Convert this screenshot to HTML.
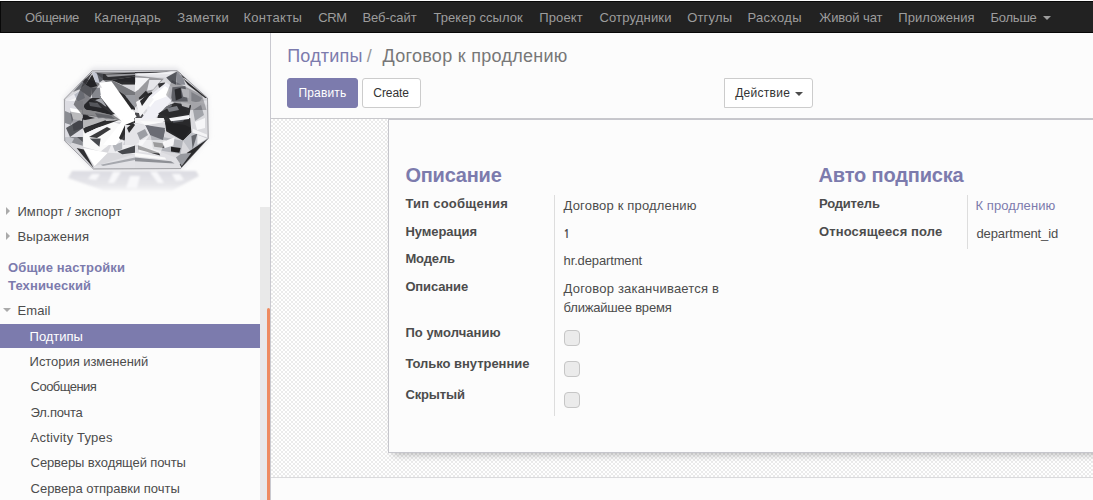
<!DOCTYPE html>
<html lang="ru">
<head>
<meta charset="utf-8">
<title>Odoo</title>
<style>
*{box-sizing:border-box;margin:0;padding:0}
html,body{width:1093px;height:500px;overflow:hidden;background:#fcfcfc}
body{position:relative;font-family:"Liberation Sans",Arial,sans-serif;font-size:13px;color:#4c4c4c;line-height:1.42857}
.t{position:absolute;white-space:nowrap;display:block;text-decoration:none}
h2{margin:0}
#nav{position:absolute;left:0;top:1px;width:1093px;height:32px;background:#222;border:1px solid #080808;border-right:0}
#nav .t{color:#9d9d9d;font-size:13px;line-height:30px}
.caret{position:absolute;width:0;height:0;border-top:4px solid;border-left:4px solid transparent;border-right:4px solid transparent}
#side{position:absolute;left:0;top:33px;width:271px;height:467px;border-right:1px solid #c9c9d0;background:#fcfcfc}
#side .t{height:25px;line-height:25px;color:#4c4c4c}
#side .hd{font-weight:bold;color:#7c7bad}
#act{position:absolute;left:0;top:291px;width:260px;height:24px;background:#7c7bad}
.tr{position:absolute;width:0;height:0;border-top:4px solid transparent;border-bottom:4px solid transparent;border-left:4px solid #aaa}
.td{position:absolute;width:0;height:0;border-left:4px solid transparent;border-right:4px solid transparent;border-top:4px solid #aaa}
#track{position:absolute;left:260px;top:174px;width:10px;height:293px;background:#e9e9e9}
#thumb{position:absolute;left:267px;top:275px;width:3px;height:200px;background:#ee8b60;border-radius:1.5px 1.5px 0 0}
#cp{position:absolute;left:271px;top:33px;width:822px;height:86px;background:#fcfcfc;border-bottom:1px solid #c8c8cc}
#cp .bc{font-size:18px;line-height:26px;color:#777}
.btn{position:absolute;top:45px;height:30px;border:1px solid #ccc;border-radius:3px;background:#fff;font:inherit;overflow:visible;text-align:left;display:block}
.btn.p{background:#7c7bad;border-color:#7c7bad}
#cp .bt{font-size:12px;line-height:18px;color:#333}
#main{position:absolute;left:271px;top:119px;width:822px;height:359px;border-bottom:1px solid #dadadc;
 background-color:#fff;background-image:repeating-conic-gradient(#ebebeb 0% 25%,#ffffff 0% 50%);background-size:4px 4px}
#sheet{position:absolute;left:117px;top:0;width:720px;height:334px;background:#fcfcfc;border:1px solid #c6c6cc;box-shadow:0 7px 7px -5px rgba(0,0,0,0.24)}
.h{font-size:20px;font-weight:bold;color:#7c7bad;line-height:24px}
.lb{font-weight:bold;color:#4c4c4c;line-height:18px}
.vl{line-height:19px;color:#4c4c4c}
.vline{position:absolute;width:1px;background:#ddd}
.cb{position:absolute;width:16px;height:16px;border:1px solid #c6c6c6;border-radius:4px;background:#ebebeb}
</style>
</head>
<body>
<nav id="nav">
<a id="n1" class="t" style="left:24.00px;top:1px;letter-spacing:-0.446px;">Общение</a>
<a id="n2" class="t" style="left:93.20px;top:1px;letter-spacing:0.107px;">Календарь</a>
<a id="n3" class="t" style="left:176.30px;top:1px;letter-spacing:0.273px;">Заметки</a>
<a id="n4" class="t" style="left:242.40px;top:1px;letter-spacing:0.327px;">Контакты</a>
<a id="n5" class="t" style="left:317.20px;top:1px;letter-spacing:-0.388px;">CRM</a>
<a id="n6" class="t" style="left:361.40px;top:1px;letter-spacing:-0.017px;">Веб-сайт</a>
<a id="n7" class="t" style="left:432.50px;top:1px;letter-spacing:0.052px;">Трекер ссылок</a>
<a id="n8" class="t" style="left:538.30px;top:1px;letter-spacing:0.107px;">Проект</a>
<a id="n9" class="t" style="left:598.40px;top:1px;letter-spacing:0.183px;">Сотрудники</a>
<a id="n10" class="t" style="left:686.20px;top:1px;letter-spacing:0.179px;">Отгулы</a>
<a id="n11" class="t" style="left:746.40px;top:1px;letter-spacing:0.324px;">Расходы</a>
<a id="n12" class="t" style="left:818.20px;top:1px;letter-spacing:-0.056px;">Живой чат</a>
<a id="n13" class="t" style="left:897.30px;top:1px;letter-spacing:0.020px;">Приложения</a>
<a id="n14" class="t" style="left:989.50px;top:1px;letter-spacing:-0.233px;">Больше</a>
<span class="caret" style="left:1042px;top:14px;color:#9d9d9d"></span>
</nav>
<aside id="side">
<svg id="logo" style="position:absolute;left:0;top:0" width="270" height="170" viewBox="0 0 270 170">
<defs><linearGradient id="sh" x1="0" y1="0" x2="0" y2="1"><stop offset="0" stop-color="#dcdce2"/><stop offset="0.7" stop-color="#e6e6ea"/><stop offset="1" stop-color="#f4f4f6"/></linearGradient><clipPath id="oc"><polygon points="92.2,37.8 177.0,37.6 207.5,65.0 208.3,105.4 180.6,135.6 93.4,136.0 64.6,107.8 64.4,66.2"/></clipPath><filter id="b1" x="-10%" y="-10%" width="120%" height="120%"><feGaussianBlur stdDeviation="0.8"/></filter><filter id="bl" x="-20%" y="-20%" width="140%" height="140%"><feGaussianBlur stdDeviation="2.5"/></filter></defs>
<polygon points="92.2,34.8 177.0,34.6 207.5,63.1 208.3,105.1 180.6,136.5 93.4,137.0 64.6,107.6 64.4,64.4" fill="#e4e4e8" filter="url(#bl)"/>
<g filter="url(#b1)">
<polygon points="72.0,138.0 196.0,138.0 199.0,143.0 172.0,157.5 104.0,157.5 68.0,145.0" fill="url(#sh)"/>
<polygon points="113.0,139.0 121.0,139.0 114.0,150.0 108.0,150.0" fill="#f8f8fa"/>
<polygon points="150.0,139.0 157.0,139.0 164.0,150.0 158.0,150.0" fill="#f8f8fa"/>
<polygon points="130.0,143.0 140.0,143.0 137.0,155.0 126.0,155.0" fill="#f8f8fa"/>
<polygon points="92.0,141.0 100.0,141.0 96.0,147.0 88.0,146.0" fill="#f8f8fa"/>
<polygon points="172.0,141.0 180.0,141.0 184.0,147.0 176.0,148.0" fill="#f8f8fa"/>
</g>
<g clip-path="url(#oc)">
<polygon points="92.2,37.8 177.0,37.6 207.5,65.0 208.3,105.4 180.6,135.6 93.4,136.0 64.6,107.8 64.4,66.2" fill="#d8d8dc"/>
<polygon points="65.8,66.2 82.6,55.4 91.0,65.0 83.8,74.6 67.0,72.8" fill="#e9e9ee"/>
<polygon points="74.2,61.4 82.6,56.0 85.0,65.0 77.8,68.6" fill="#b9bcc6"/>
<polygon points="79.0,56.6 85.6,51.8 91.0,54.8 91.0,65.0" fill="#8e9096"/>
<polygon points="85.6,51.8 92.2,41.6 97.2,53.0 91.0,54.8" fill="#2a2a2c"/>
<polygon points="92.4,39.2 96.7,39.8 99.6,49.4 96.0,50.8" fill="#c3c7d3"/>
<polygon points="96.7,39.8 105.4,41.0 103.0,47.0 99.6,49.4" fill="#5c5e64"/>
<polygon points="91.0,54.8 100.0,54.8 101.2,65.0 92.2,65.0" fill="#86888e"/>
<polygon points="103.0,41.0 135.0,39.6 135.0,43.4 111.4,47.0 103.0,47.0" fill="#3a3a3c"/>
<polygon points="105.4,41.6 135.0,40.8 135.0,42.0 107.8,44.0" fill="#dcdce0"/>
<polygon points="103.0,47.0 111.4,47.0 135.0,59.0 135.0,68.6 111.4,53.0" fill="#77787c"/>
<polygon points="111.4,47.0 135.0,43.4 135.0,51.8 122.2,51.8" fill="#2c2c2e"/>
<polygon points="122.2,51.8 135.0,51.8 135.0,59.0" fill="#d8d8dc"/>
<polygon points="111.4,53.0 135.0,68.6 135.0,77.0 127.0,74.6 109.0,54.8" fill="#2e2e30"/>
<polygon points="100.0,54.8 109.0,54.2 135.0,79.4 135.0,89.0 122.2,89.0 101.2,65.0" fill="#ffffff"/>
<polygon points="83.8,73.6 92.2,65.0 101.2,65.0 112.6,79.4 86.2,77.2" fill="#2a2a2c"/>
<polygon points="91.0,68.6 101.2,65.0 106.6,73.4 94.6,74.6" fill="#a4a6ac"/>
<polygon points="65.8,72.8 83.8,74.6 86.2,77.2 91.0,89.0 66.0,89.0" fill="#dedee2"/>
<polygon points="66.4,77.0 73.0,75.8 75.4,81.8 67.0,85.4" fill="#6a6c72"/>
<polygon points="79.0,78.2 86.2,77.2 91.0,85.4 83.8,86.6" fill="#3a3a3e"/>
<polygon points="86.2,77.2 112.6,79.4 122.2,89.0 91.0,89.0" fill="#f2f2f4"/>
<polygon points="94.6,80.6 111.4,81.8 115.0,85.4 98.2,85.4" fill="#a0a2a8"/>
<polygon points="135.0,38.6 175.8,38.1 166.2,44.6 135.0,42.4" fill="#e4e4e8"/>
<polygon points="135.0,39.1 171.0,38.6 149.4,40.8 135.0,40.3" fill="#3c3c40"/>
<polygon points="166.2,44.6 177.0,38.6 176.0,51.8 171.0,49.4" fill="#55575d"/>
<polygon points="177.0,38.6 183.0,44.6 185.4,51.8 176.4,51.8" fill="#8a8c94"/>
<polygon points="180.6,41.0 187.8,47.0 183.0,44.6" fill="#2a2a2c"/>
<polygon points="135.0,42.4 163.8,45.8 142.2,68.6 135.0,74.6" fill="#9a9a9e"/>
<polygon points="135.0,44.6 149.4,45.2 138.6,56.6 135.0,59.0" fill="#f4f4f6"/>
<polygon points="145.8,61.4 151.8,59.0 154.2,65.0 148.2,68.6" fill="#222224"/>
<polygon points="157.8,50.6 165.0,49.4 163.8,55.4 159.0,54.8" fill="#333336"/>
<polygon points="149.4,47.0 161.4,47.0 153.0,56.6 147.0,57.8" fill="#e6e6ea"/>
<polygon points="138.6,65.0 145.8,57.8 148.2,60.2 141.0,68.6" fill="#2c2c2e"/>
<polygon points="142.2,68.6 166.2,49.4 172.4,54.2 170.0,67.4 151.8,85.4" fill="#ececf2"/>
<polygon points="147.0,68.6 165.0,53.0 169.8,56.6 167.4,66.2 153.0,80.6" fill="#ffffff"/>
<polygon points="172.4,54.2 185.4,53.0 187.8,68.6 171.0,68.6" fill="#77797f"/>
<polygon points="174.6,56.6 180.6,54.8 181.8,65.0 175.8,67.4" fill="#2a2a2c"/>
<polygon points="181.2,55.4 189.0,56.8 189.0,65.0 183.2,63.8" fill="#f0f0f2"/>
<polygon points="189.0,53.0 207.0,65.0 206.0,79.4 191.4,68.8" fill="#d4d4d8"/>
<polygon points="183.0,45.2 207.0,65.0 205.2,65.0 187.8,51.8" fill="#2c2c2e"/>
<polygon points="191.4,59.0 202.2,65.0 197.4,72.2 191.4,68.6" fill="#a6a8ae"/>
<polygon points="159.0,77.0 174.6,69.8 191.4,72.2 187.8,89.0 156.6,89.0" fill="#303032"/>
<polygon points="160.2,77.0 171.0,71.0 174.6,77.0 165.0,81.8" fill="#6d6f75"/>
<polygon points="191.4,69.8 207.0,67.4 207.2,89.0 189.0,89.0" fill="#e2e2e6"/>
<polygon points="192.6,74.6 202.2,72.2 199.8,84.2 192.6,85.4" fill="#9ea0a6"/>
<polygon points="135.0,74.6 151.8,85.4 147.0,89.0 135.0,89.0" fill="#e9e9ec"/>
<polygon points="135.0,79.4 142.2,80.6 145.8,85.4 135.0,85.4" fill="#4a4a4e"/>
<polygon points="65.2,85.0 71.8,86.2 67.0,94.6 65.2,97.0" fill="#444448"/>
<polygon points="71.8,86.2 83.2,87.4 82.6,92.2 67.0,97.0" fill="#e6e6ea"/>
<polygon points="67.0,97.0 82.6,89.8 82.8,112.8 65.2,107.8" fill="#8c8e94"/>
<polygon points="73.0,100.6 82.6,99.4 82.8,109.0" fill="#55575c"/>
<polygon points="65.8,103.0 74.2,105.4 70.6,111.4 65.2,107.8" fill="#c4c6cc"/>
<polygon points="76.6,115.0 83.8,116.4 93.6,135.1 85.0,125.2" fill="#303033"/>
<polygon points="83.2,87.4 103.0,85.0 122.2,92.2 112.6,109.0 100.6,118.6 83.2,113.8" fill="#fafafa"/>
<polygon points="85.0,94.6 105.4,87.2 107.8,89.8 87.4,98.4" fill="#333336"/>
<polygon points="89.8,105.4 100.6,105.4 99.4,113.8" fill="#47494e"/>
<polygon points="91.0,98.2 103.0,94.6 100.6,103.0 91.0,104.2" fill="#b8bac0"/>
<polygon points="83.2,115.0 107.8,119.8 94.6,133.2" fill="#ffffff"/>
<polygon points="112.6,109.0 135.0,97.0 135.0,121.0 107.8,119.8" fill="#ededf0"/>
<polygon points="119.8,105.4 131.8,89.8 135.0,92.2 124.6,107.8" fill="#444448"/>
<polygon points="112.6,112.6 122.2,109.0 122.2,116.2 115.0,118.6" fill="#b4b6bc"/>
<polygon points="117.4,118.6 135.0,112.6 135.0,119.8 122.2,121.2" fill="#47494e"/>
<polygon points="122.2,85.0 135.0,85.0 135.0,89.8 127.0,92.2" fill="#2c2c2e"/>
<polygon points="94.6,133.2 135.0,121.0 135.0,135.6 93.6,135.6" fill="#e2e2e6"/>
<polygon points="100.6,131.8 135.0,124.6 135.0,127.0 103.0,133.0" fill="#a6a8ae"/>
<polygon points="135.0,85.0 163.8,85.0 165.0,88.6 147.0,92.2 135.0,89.8" fill="#f2f2f4"/>
<polygon points="147.0,92.2 165.0,97.0 162.6,109.0 150.6,100.6" fill="#6c6e74"/>
<polygon points="165.0,88.6 190.2,85.0 191.4,99.4 183.0,107.8 166.2,98.2" fill="#29292b"/>
<polygon points="171.0,85.0 185.4,85.0 183.0,88.6 173.4,89.8" fill="#55575d"/>
<polygon points="135.0,91.0 147.0,92.2 150.6,100.6 142.2,112.6 135.0,111.4" fill="#efeff2"/>
<polygon points="137.4,95.8 145.8,97.0 143.4,105.4 137.4,104.2" fill="#a9abb1"/>
<polygon points="150.6,101.8 183.0,107.8 180.6,121.0 153.0,116.2" fill="#b2b4ba"/>
<polygon points="162.6,109.0 174.6,104.2 173.4,112.6 165.0,115.0" fill="#f6f6f8"/>
<polygon points="153.0,109.0 162.6,110.2 163.8,115.0 154.2,113.8" fill="#222224"/>
<polygon points="171.0,113.8 180.6,115.0 179.4,119.8 171.0,118.6" fill="#222224"/>
<polygon points="191.4,99.4 208.2,105.4 191.4,119.8 183.0,107.8" fill="#bfc1c7"/>
<polygon points="191.4,103.0 197.4,100.6 192.6,116.2" fill="#66686e"/>
<polygon points="197.4,101.8 207.0,105.4 197.4,111.4" fill="#f0f0f2"/>
<polygon points="187.8,119.2 208.4,105.6 182.0,134.8 178.8,132.4" fill="#2a2a2c"/>
<polygon points="180.6,121.0 191.4,119.8 181.8,133.0 175.8,124.6" fill="#97999f"/>
<polygon points="135.0,113.8 153.0,116.2 175.8,124.6 181.8,135.1 135.0,135.6" fill="#e0e0e4"/>
<polygon points="138.6,112.6 159.0,119.8 160.2,122.4 138.6,116.4" fill="#333336"/>
<polygon points="135.0,124.6 171.0,128.2 174.6,130.6 135.0,128.2" fill="#8e9096"/>
<polygon points="135.0,119.8 165.0,124.6 166.2,126.4 135.0,123.4" fill="#fafafa"/>
<polygon points="82.0,48.8 91.0,40.4 92.4,39.2 85.6,51.8" fill="#4a4a4e"/>
<polygon points="73.0,59.0 82.0,48.8 85.6,51.8 79.0,56.6" fill="#707278"/>
<polygon points="67.0,68.6 75.4,65.0 79.0,71.0 69.4,72.8" fill="#f6f6f8"/>
<polygon points="177.0,38.1 184.2,41.6 180.6,41.0" fill="#2e2e30"/>
<polygon points="137.4,40.5 174.6,39.1 171.0,41.0 137.4,41.7" fill="#f2f2f4"/>
<polygon points="65.6,98.2 73.0,97.0 71.8,103.0 65.8,103.0" fill="#f8f8fa"/>
<polygon points="192.6,92.2 207.0,99.4 207.0,104.2 192.6,99.4" fill="#f4f4f6"/>
<polygon points="65.0,68.0 83.0,68.0 83.0,104.0 65.0,104.0" fill="#dcdce2"/>
<polygon points="65.0,78.0 75.0,82.0 71.0,92.0 65.0,90.0" fill="#8a8c92"/>
<polygon points="66.0,95.0 83.0,85.0 83.0,95.0 70.0,104.0" fill="#55575c"/>
<polygon points="70.0,75.0 82.0,77.0 82.0,88.0 73.0,86.0" fill="#ffffff"/>
<polygon points="84.0,72.0 91.0,65.0 101.0,70.0 115.0,81.0 111.0,82.0 85.0,75.5" fill="#303033"/>
<polygon points="89.0,69.0 97.0,70.0 102.0,75.0 90.0,73.0" fill="#8e9096"/>
<polygon points="83.0,76.0 111.0,82.0 121.0,87.5 83.0,81.5" fill="#f4f4f6"/>
<polygon points="95.0,80.0 111.0,82.5 115.0,86.0 97.0,83.5" fill="#a9abb1"/>
<polygon points="83.0,82.0 95.0,85.0 85.0,87.0 83.0,86.5" fill="#2c2c2e"/>
<polygon points="83.0,95.5 105.0,88.2 119.0,87.0 97.0,95.0 85.0,100.5" fill="#2e2e30"/>
<polygon points="85.0,100.5 97.0,95.0 111.0,91.0 95.0,104.0" fill="#f6f6f8"/>
<polygon points="89.0,104.0 107.0,94.0 111.0,96.0 97.0,105.0" fill="#3a3a3c"/>
<polygon points="100.0,62.0 112.0,62.0 135.0,87.0 116.0,112.0 103.0,112.0 123.0,87.0" fill="#ffffff"/>
<polygon points="115.0,62.0 125.0,62.0 131.0,71.5 124.0,74.0" fill="#2c2c2e"/>
<polygon points="125.0,92.0 134.0,88.2 121.0,107.0 119.0,105.0" fill="#2c2c2e"/>
<polygon points="125.0,62.0 135.0,62.0 135.0,75.0 131.0,71.5" fill="#9a9ca2"/>
<polygon points="125.0,106.0 135.0,92.0 135.0,112.0 123.0,112.0" fill="#d0d0d6"/>
<polygon points="140.0,87.0 155.0,68.0 170.0,62.0 172.0,67.0 155.0,85.5" fill="#f0f0f6"/>
<polygon points="127.0,65.0 134.0,74.0 131.0,78.0 125.0,69.0" fill="#2a2a2c"/>
<polygon points="136.0,69.0 148.0,62.0 154.0,66.0 140.0,84.0" fill="#f4f4f6"/>
<polygon points="140.0,68.0 146.5,62.0 150.0,62.0 142.0,73.0" fill="#2a2a2c"/>
<polygon points="158.0,80.5 172.0,73.0 181.0,72.0 189.0,80.0 170.0,84.2" fill="#2b2b2d"/>
<polygon points="167.0,75.0 177.0,73.0 179.0,77.0 169.0,79.0" fill="#7d7f85"/>
<polygon points="169.0,85.2 189.0,82.0 189.0,86.0 171.0,88.2" fill="#f4f4f6"/>
<polygon points="181.0,69.0 190.0,71.0 189.0,75.0 182.0,73.0" fill="#f2f2f4"/>
<polygon points="165.0,89.2 185.0,92.0 191.0,95.0 183.0,107.0 167.0,96.0" fill="#222224"/>
<polygon points="145.0,92.0 165.0,95.0 163.0,107.0 150.0,102.0" fill="#6a6c74"/>
<polygon points="140.0,88.0 165.0,89.0 145.0,92.0" fill="#fafafa"/>
<polygon points="191.0,68.0 208.0,72.0 208.0,102.0 191.0,95.0" fill="#dadade"/>
<polygon points="193.0,77.0 201.0,72.0 204.0,82.0 195.0,88.0" fill="#a2a4aa"/>
<polygon points="195.0,89.0 205.0,85.0 205.0,95.0 197.0,97.0" fill="#f6f6f8"/>
<polygon points="125.0,92.0 145.0,92.0 150.0,102.0 135.0,112.0 125.0,112.0" fill="#e4e4e8"/>
<polygon points="127.0,95.0 133.0,90.0 135.0,92.0 129.0,100.0" fill="#2c2c2e"/>
<polygon points="137.0,100.0 145.0,96.0 148.0,102.0 140.0,107.0" fill="#9c9ea4"/>
<polygon points="85.0,45.5 100.0,50.6 89.5,65.0 121.0,87.5 82.0,81.5 73.6,71.6" fill="rgba(28,28,32,0.50)"/>
<polygon points="94.6,38.9 135.4,38.9 135.4,49.4 104.5,47.0" fill="rgba(28,28,32,0.35)"/>
<polygon points="172.0,47.0 202.0,62.0 206.5,77.0 181.0,77.0 166.0,62.0" fill="rgba(40,40,45,0.30)"/>
<polygon points="70.0,78.5 115.0,86.6 73.6,98.0" fill="rgba(28,28,32,0.30)"/>
<polygon points="139.0,107.0 166.0,107.0 160.0,120.5 139.0,119.0" fill="rgba(255,255,255,0.55)"/>
<polygon points="99.1,50.0 111.4,48.2 136.6,83.6 130.0,89.6 116.5,78.5" fill="#ffffff"/>
</g>
<polygon points="92.2,37.8 177.0,37.6 207.5,65.0 208.3,105.4 180.6,135.6 93.4,136.0 64.6,107.8 64.4,66.2" fill="none" stroke="#5a5a60" stroke-width="0.7" stroke-opacity="0.75"/>
</svg>
<div class="tr" style="left:6px;top:174px"></div><a id="s1" class="t" style="left:17.40px;top:166px;letter-spacing:0.116px;">Импорт / экспорт</a>
<div class="tr" style="left:6px;top:199px"></div><a id="s2" class="t" style="left:17.40px;top:191px;letter-spacing:0.220px;">Выражения</a>
<span id="s3" class="t hd" style="left:8.00px;top:222px;letter-spacing:0.143px;">Общие настройки</span>
<span id="s4" class="t hd" style="left:8.00px;top:239.5px;letter-spacing:0.124px;">Технический</span>
<div class="td" style="left:3px;top:275px"></div><a id="s5" class="t" style="left:17.60px;top:265px;letter-spacing:0.045px;">Email</a>
<div id="act"></div>
<a id="s6" class="t" style="left:29.60px;top:291px;letter-spacing:-0.055px;color:#fff">Подтипы</a>
<a id="s7" class="t" style="left:29.60px;top:316px;letter-spacing:-0.054px;">История изменений</a>
<a id="s8" class="t" style="left:30.60px;top:341px;letter-spacing:-0.539px;">Сообщения</a>
<a id="s9" class="t" style="left:30.60px;top:367px;letter-spacing:-0.239px;">Эл.почта</a>
<a id="s10" class="t" style="left:30.60px;top:392px;letter-spacing:0.203px;">Activity Types</a>
<a id="s11" class="t" style="left:30.60px;top:417px;letter-spacing:-0.106px;">Серверы входящей почты</a>
<a id="s12" class="t" style="left:30.60px;top:443px;letter-spacing:-0.033px;">Сервера отправки почты</a>
<div id="track"></div><div id="thumb"></div>
</aside>
<div id="cp">
<a id="b1" class="t bc" style="left:16.20px;top:9.5px;letter-spacing:0.200px;color:#7c7bad">Подтипы</a>
<span id="b2" class="t bc" style="left:95.70px;top:9.5px;letter-spacing:0.000px;color:#999">/</span>
<span id="b3" class="t bc" style="left:111.50px;top:9.5px;letter-spacing:0.282px;">Договор к продлению</span>
<button class="btn p" style="left:16px;width:71px"><span id="bt1" class="t bt" style="left:10.50px;top:5px;letter-spacing:0.142px;color:#fff">Править</span></button>
<button class="btn" style="left:91px;width:59px"><span id="bt2" class="t bt" style="left:10.30px;top:5px;letter-spacing:-0.069px;">Create</span></button>
<button class="btn" style="left:453px;width:89px;border-radius:0 3px 3px 0"><span id="bt3" class="t bt" style="left:10.20px;top:5px;letter-spacing:0.275px;">Действие</span><span class="caret" style="left:70px;top:13px;color:#4c4c4c"></span></button>
</div>
<div id="main"><div id="sheet">
<h2 id="h1" class="t h" style="left:16.40px;top:43px;letter-spacing:-0.214px;">Описание</h2>
<label id="l1" class="t lb" style="left:16.40px;top:75px;letter-spacing:0.226px;">Тип сообщения</label>
<label id="l2" class="t lb" style="left:16.40px;top:103px;letter-spacing:-0.056px;">Нумерация</label>
<label id="l3" class="t lb" style="left:16.40px;top:130px;letter-spacing:-0.148px;">Модель</label>
<label id="l4" class="t lb" style="left:16.40px;top:158px;letter-spacing:-0.131px;">Описание</label>
<label id="l5" class="t lb" style="left:16.40px;top:204px;letter-spacing:0.048px;">По умолчанию</label>
<label id="l6" class="t lb" style="left:16.40px;top:235px;letter-spacing:-0.034px;">Только внутренние</label>
<label id="l7" class="t lb" style="left:16.40px;top:266px;letter-spacing:-0.151px;">Скрытый</label>
<div class="vline" style="left:165px;top:75px;height:221px"></div>
<span id="v1" class="t vl" style="left:174.60px;top:76px;letter-spacing:0.175px;">Договор к продлению</span>
<span id="v2" class="t vl" style="left:175.50px;top:104px;letter-spacing:0.000px;font-family:NanumGothic,sans-serif;font-size:11.5px;font-weight:bold;margin-left:-1.3px;margin-top:1px;">1</span>
<span id="v3" class="t vl" style="left:174.60px;top:131px;letter-spacing:-0.142px;">hr.department</span>
<span id="v4" class="t vl" style="left:174.60px;top:159px;letter-spacing:0.202px;">Договор заканчивается в</span>
<span id="v5" class="t vl" style="left:174.60px;top:178px;letter-spacing:-0.186px;">ближайшее время</span>
<div class="cb" style="left:175px;top:210px"></div>
<div class="cb" style="left:175px;top:241px"></div>
<div class="cb" style="left:175px;top:272px"></div>
<h2 id="h2" class="t h" style="left:429.50px;top:43px;letter-spacing:-0.160px;">Авто подписка</h2>
<label id="l8" class="t lb" style="left:430.00px;top:75px;letter-spacing:-0.188px;">Родитель</label>
<label id="l9" class="t lb" style="left:430.00px;top:103px;letter-spacing:0.123px;">Относящееся поле</label>
<div class="vline" style="left:578px;top:75px;height:54px"></div>
<a id="v6" class="t vl" style="left:586.50px;top:76px;letter-spacing:0.076px;color:#7c7bad">К продлению</a>
<span id="v7" class="t vl" style="left:587.50px;top:104px;letter-spacing:-0.115px;">department_id</span>
</div></div>
</body>
</html>
